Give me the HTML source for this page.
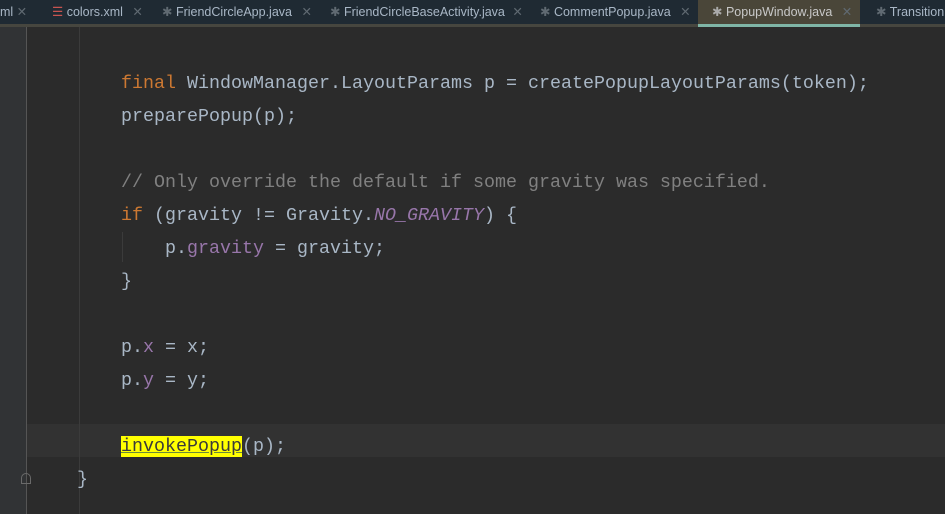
<!DOCTYPE html>
<html><head><style>
body{margin:0;width:945px;height:514px;overflow:hidden;background:#2b2b2b;position:relative;font-family:"Liberation Sans",sans-serif}
.tabs{position:absolute;left:0;top:0;width:945px;height:24px;background:#1f2a33;color:#a9b7c6;font-size:12.5px}
.tabs > span{position:absolute;top:4px;white-space:nowrap}
.x{color:#606a72}
.tb{position:absolute;left:0;top:24px;width:945px;height:3px;background:#46463f}
.act{position:absolute;left:698px;top:0;width:162px;height:24px;background:#4a4639}
.actl{position:absolute;left:698px;top:24px;width:162px;height:3px;background:#7fb5a6}
.gut{position:absolute;left:0;top:27px;width:26px;height:487px;background:#313335;border-right:1px solid #555}
.cur{position:absolute;left:27px;top:424px;width:918px;height:33px;background:#323232}
.guide{position:absolute;left:79px;top:27px;width:1px;height:487px;background:#3b3b3b}
.guide2{position:absolute;left:122px;top:232px;width:1px;height:30px;background:#3b3b3b}
.code{position:absolute;left:0;top:2px;font-family:"Liberation Mono",monospace;font-size:18.33px;color:#a9b7c6}
.l{position:absolute;white-space:pre;line-height:20px}
.k{color:#cc7832}.c{color:#808080}.f{color:#9876aa}.i{color:#9876aa;font-style:italic}
.hl{background:#ffff00;color:#3a3a3a;text-decoration:underline;text-decoration-color:#6a8a3a}
</style></head><body>
<div class="tabs">
<div class="act"></div>
<span style="left:0">ml <span class="x">✕</span></span>
<span style="left:52px"><span style="color:#c75450">☰</span> colors.xml <span class="x" style="margin-left:6px">✕</span></span>
<span style="left:162px"><span class="x">✱</span> FriendCircleApp.java <span class="x" style="margin-left:6px">✕</span></span>
<span style="left:330px"><span class="x">✱</span> FriendCircleBaseActivity.java <span class="x" style="margin-left:4px">✕</span></span>
<span style="left:540px"><span class="x">✱</span> CommentPopup.java <span class="x" style="margin-left:6px">✕</span></span>
<span style="left:712px;color:#c8c8c8"><span style="color:#aaa">✱</span> PopupWindow.java <span class="x" style="margin-left:6px">✕</span></span>
<span style="left:876px"><span class="x">✱</span> Transition</span>
</div>
<div class="tb"></div><div class="actl"></div>
<div class="gut"></div>
<div class="cur"></div>
<div class="guide"></div>
<div class="guide2"></div>
<div style="position:absolute;left:21px;top:473px;width:10px;height:11px;border:1px solid #6a6a6a;border-radius:5px 5px 0 0;box-sizing:border-box"></div>
<div class="code">
<div class="l" style="left:121px;top:72px"><span class="k">final</span> WindowManager.LayoutParams p = createPopupLayoutParams(token);</div>
<div class="l" style="left:121px;top:105px">preparePopup(p);</div>
<div class="l c" style="left:121px;top:171px">// Only override the default if some gravity was specified.</div>
<div class="l" style="left:121px;top:204px"><span class="k">if</span> (gravity != Gravity.<span class="i">NO_GRAVITY</span>) {</div>
<div class="l" style="left:165px;top:237px">p.<span class="f">gravity</span> = gravity;</div>
<div class="l" style="left:121px;top:270px">}</div>
<div class="l" style="left:121px;top:336px">p.<span class="f">x</span> = x;</div>
<div class="l" style="left:121px;top:369px">p.<span class="f">y</span> = y;</div>
<div class="l" style="left:121px;top:435px"><span class="hl">invokePopup</span>(p);</div>
<div class="l" style="left:77px;top:468px">}</div>
</div>
</body></html>
